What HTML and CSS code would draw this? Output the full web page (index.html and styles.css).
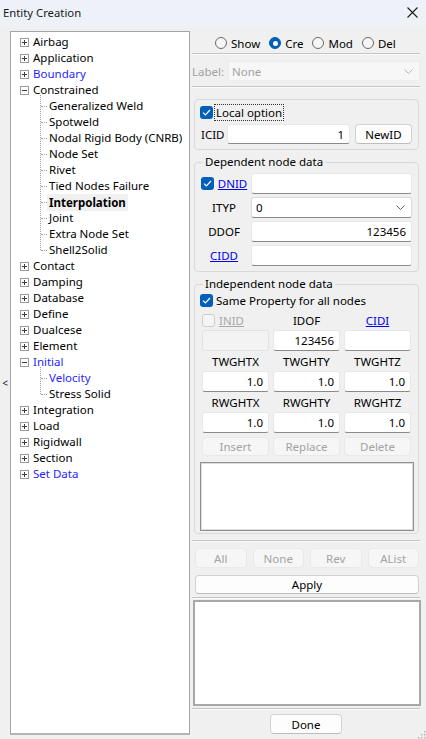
FILE: index.html
```html
<!DOCTYPE html>
<html>
<head>
<meta charset="utf-8">
<title>Entity Creation</title>
<link rel="stylesheet" href="styles.css">
</head>
<body>
<div class="win">
  <div class="titlebar">
    <span class="title">Entity Creation</span>
    <svg class="close" width="11" height="11" viewBox="0 0 11 11"><path d="M0.5 0.5L10.5 10.5M10.5 0.5L0.5 10.5" stroke="#1c1c1c" stroke-width="1.1" fill="none"/></svg>
  </div>
  <div class="main">
    <div class="splitter"><span>&lt;</span></div>
    <div class="tree">
      <div class="row"><svg class="exp" viewBox="0 0 9 9"><rect x="0.5" y="0.5" width="8" height="8" fill="#fff" stroke="#9a9a9a"/><path d="M2 4.5h5M4.5 2v5" stroke="#3c3c3c"/></svg><span class="t">Airbag</span></div>
      <div class="row"><svg class="exp" viewBox="0 0 9 9"><rect x="0.5" y="0.5" width="8" height="8" fill="#fff" stroke="#9a9a9a"/><path d="M2 4.5h5M4.5 2v5" stroke="#3c3c3c"/></svg><span class="t">Application</span></div>
      <div class="row"><svg class="exp" viewBox="0 0 9 9"><rect x="0.5" y="0.5" width="8" height="8" fill="#fff" stroke="#9a9a9a"/><path d="M2 4.5h5M4.5 2v5" stroke="#3c3c3c"/></svg><span class="t blue">Boundary</span></div>
      <div class="row"><svg class="exp" viewBox="0 0 9 9"><rect x="0.5" y="0.5" width="8" height="8" fill="#fff" stroke="#9a9a9a"/><path d="M2 4.5h5" stroke="#3c3c3c"/></svg><span class="t">Constrained</span></div>
      <div class="kids">
        <div class="kid"><span class="t">Generalized Weld</span></div>
        <div class="kid"><span class="t">Spotweld</span></div>
        <div class="kid"><span class="t">Nodal Rigid Body (CNRB)</span></div>
        <div class="kid"><span class="t">Node Set</span></div>
        <div class="kid"><span class="t">Rivet</span></div>
        <div class="kid"><span class="t">Tied Nodes Failure</span></div>
        <div class="kid"><span class="t sel">Interpolation</span></div>
        <div class="kid"><span class="t">Joint</span></div>
        <div class="kid"><span class="t">Extra Node Set</span></div>
        <div class="kid"><span class="t">Shell2Solid</span></div>
      </div>
      <div class="row"><svg class="exp" viewBox="0 0 9 9"><rect x="0.5" y="0.5" width="8" height="8" fill="#fff" stroke="#9a9a9a"/><path d="M2 4.5h5M4.5 2v5" stroke="#3c3c3c"/></svg><span class="t">Contact</span></div>
      <div class="row"><svg class="exp" viewBox="0 0 9 9"><rect x="0.5" y="0.5" width="8" height="8" fill="#fff" stroke="#9a9a9a"/><path d="M2 4.5h5M4.5 2v5" stroke="#3c3c3c"/></svg><span class="t">Damping</span></div>
      <div class="row"><svg class="exp" viewBox="0 0 9 9"><rect x="0.5" y="0.5" width="8" height="8" fill="#fff" stroke="#9a9a9a"/><path d="M2 4.5h5M4.5 2v5" stroke="#3c3c3c"/></svg><span class="t">Database</span></div>
      <div class="row"><svg class="exp" viewBox="0 0 9 9"><rect x="0.5" y="0.5" width="8" height="8" fill="#fff" stroke="#9a9a9a"/><path d="M2 4.5h5M4.5 2v5" stroke="#3c3c3c"/></svg><span class="t">Define</span></div>
      <div class="row"><svg class="exp" viewBox="0 0 9 9"><rect x="0.5" y="0.5" width="8" height="8" fill="#fff" stroke="#9a9a9a"/><path d="M2 4.5h5M4.5 2v5" stroke="#3c3c3c"/></svg><span class="t">Dualcese</span></div>
      <div class="row"><svg class="exp" viewBox="0 0 9 9"><rect x="0.5" y="0.5" width="8" height="8" fill="#fff" stroke="#9a9a9a"/><path d="M2 4.5h5M4.5 2v5" stroke="#3c3c3c"/></svg><span class="t">Element</span></div>
      <div class="row"><svg class="exp" viewBox="0 0 9 9"><rect x="0.5" y="0.5" width="8" height="8" fill="#fff" stroke="#9a9a9a"/><path d="M2 4.5h5" stroke="#3c3c3c"/></svg><span class="t blue">Initial</span></div>
      <div class="kids">
        <div class="kid"><span class="t blue">Velocity</span></div>
        <div class="kid"><span class="t">Stress Solid</span></div>
      </div>
      <div class="row"><svg class="exp" viewBox="0 0 9 9"><rect x="0.5" y="0.5" width="8" height="8" fill="#fff" stroke="#9a9a9a"/><path d="M2 4.5h5M4.5 2v5" stroke="#3c3c3c"/></svg><span class="t">Integration</span></div>
      <div class="row"><svg class="exp" viewBox="0 0 9 9"><rect x="0.5" y="0.5" width="8" height="8" fill="#fff" stroke="#9a9a9a"/><path d="M2 4.5h5M4.5 2v5" stroke="#3c3c3c"/></svg><span class="t">Load</span></div>
      <div class="row"><svg class="exp" viewBox="0 0 9 9"><rect x="0.5" y="0.5" width="8" height="8" fill="#fff" stroke="#9a9a9a"/><path d="M2 4.5h5M4.5 2v5" stroke="#3c3c3c"/></svg><span class="t">Rigidwall</span></div>
      <div class="row"><svg class="exp" viewBox="0 0 9 9"><rect x="0.5" y="0.5" width="8" height="8" fill="#fff" stroke="#9a9a9a"/><path d="M2 4.5h5M4.5 2v5" stroke="#3c3c3c"/></svg><span class="t">Section</span></div>
      <div class="row"><svg class="exp" viewBox="0 0 9 9"><rect x="0.5" y="0.5" width="8" height="8" fill="#fff" stroke="#9a9a9a"/><path d="M2 4.5h5M4.5 2v5" stroke="#3c3c3c"/></svg><span class="t blue">Set Data</span></div>
    </div>

    <div class="panel">
      <div class="radios">
        <div class="radio"><span class="rc"></span><span>Show</span></div>
        <div class="radio"><span class="rc on"></span><span>Cre</span></div>
        <div class="radio"><span class="rc"></span><span>Mod</span></div>
        <div class="radio"><span class="rc"></span><span>Del</span></div>
      </div>
      <div class="sep"></div>
      <div class="labelrow">
        <span class="lab">Label:</span>
        <div class="combo dis"><span>None</span><svg class="chev" width="9" height="5" viewBox="0 0 9 5"><path d="M0.5 0.5L4.5 4.5L8.5 0.5" stroke="#b4b4b4" fill="none"/></svg></div>
      </div>
      <div class="sep sep2"></div>

      <div class="grp1">
        <div class="lrow">
          <span class="cb"><svg width="9" height="7" viewBox="0 0 9 7"><path d="M1 3.6L3.4 6L8 1" stroke="#fff" stroke-width="1.2" fill="none"/></svg></span>
          <span class="focus">Local option</span>
        </div>
        <div class="irow">
          <span class="icid">ICID</span>
          <div class="inp w123">1</div>
          <div class="btn newid">NewID</div>
        </div>
      </div>

      <fieldset class="grp">
        <legend>Dependent node data</legend>
        <div class="frow first">
          <div class="fl"><span class="cb"><svg width="9" height="7" viewBox="0 0 9 7"><path d="M1 3.6L3.4 6L8 1" stroke="#fff" stroke-width="1.2" fill="none"/></svg></span><span class="link">DNID</span></div>
          <div class="inp"></div>
        </div>
        <div class="frow">
          <div class="fl">ITYP</div>
          <div class="combo"><span>0</span><svg class="chev" width="9" height="5" viewBox="0 0 9 5"><path d="M0.5 0.5L4.5 4.5L8.5 0.5" stroke="#606060" fill="none"/></svg></div>
        </div>
        <div class="frow">
          <div class="fl">DDOF</div>
          <div class="inp">123456</div>
        </div>
        <div class="frow">
          <div class="fl"><span class="link">CIDD</span></div>
          <div class="inp"></div>
        </div>
      </fieldset>

      <fieldset class="grp grp3">
        <legend>Independent node data</legend>
        <div class="srow">
          <span class="cb"><svg width="9" height="7" viewBox="0 0 9 7"><path d="M1 3.6L3.4 6L8 1" stroke="#fff" stroke-width="1.2" fill="none"/></svg></span>
          <span>Same Property for all nodes</span>
        </div>
        <div class="g3">
          <div class="gl left"><span class="cb dis"></span><span class="dlink">INID</span></div>
          <div class="gl">IDOF</div>
          <div class="gl"><span class="link">CIDI</span></div>
          <div class="inp dis"></div>
          <div class="inp">123456</div>
          <div class="inp"></div>
          <div class="gl">TWGHTX</div>
          <div class="gl">TWGHTY</div>
          <div class="gl">TWGHTZ</div>
          <div class="inp">1.0</div>
          <div class="inp">1.0</div>
          <div class="inp">1.0</div>
          <div class="gl">RWGHTX</div>
          <div class="gl">RWGHTY</div>
          <div class="gl">RWGHTZ</div>
          <div class="inp">1.0</div>
          <div class="inp">1.0</div>
          <div class="inp">1.0</div>
        </div>
        <div class="g3 btns3">
          <div class="btn dis">Insert</div>
          <div class="btn dis">Replace</div>
          <div class="btn dis">Delete</div>
        </div>
        <div class="listbox"></div>
      </fieldset>

      <div class="sep sep3"></div>
      <div class="btns4">
        <div class="btn dis">All</div>
        <div class="btn dis">None</div>
        <div class="btn dis">Rev</div>
        <div class="btn dis">AList</div>
      </div>
      <div class="btn apply">Apply</div>
      <div class="sep sep4"></div>
      <div class="textarea"></div>
      <div class="sep sep5"></div>
      <div class="btn done">Done</div>
    </div>
  </div>
  <svg class="grip" width="9" height="9" viewBox="0 0 9 9"><g fill="#b0b0b0"><rect x="7" y="1" width="1.4" height="1.4"/><rect x="4" y="4" width="1.4" height="1.4"/><rect x="7" y="4" width="1.4" height="1.4"/><rect x="1" y="7" width="1.4" height="1.4"/><rect x="4" y="7" width="1.4" height="1.4"/><rect x="7" y="7" width="1.4" height="1.4"/></g></svg>
</div>
</body>
</html>
```

FILE: styles.css
```css
* { box-sizing: border-box; }
html, body { margin: 0; padding: 0; }
body {
  width: 426px;
  height: 739px;
  overflow: hidden;
  background: #f0f0f0;
  font-family: "Noto Sans", "Open Sans", sans-serif;
  font-size: 11.5px;
  color: #000;
}
.win { position: relative; width: 426px; height: 739px; }

.titlebar {
  height: 27px;
  background: #eef2f8;
  display: flex;
  align-items: center;
  justify-content: space-between;
  padding: 0 8px 3px 3px;
}
.title { font-size: 11.3px; color: #1a1a1a; }

.main { display: flex; height: 712px; }

.splitter {
  width: 10px;
  display: flex;
  align-items: center;
  justify-content: center;
  font-size: 10px;
  color: #222;
}

.tree {
  width: 180px;
  height: 704px;
  margin-top: 4px;
  background: #fff;
  border: 1px solid #a4a4aa;
  border-bottom: 2px solid #b4b4b8;
  padding-top: 2px;
}
.row {
  height: 16px;
  display: flex;
  align-items: center;
  padding-left: 9px;
}
.exp { width: 9px; height: 9px; margin-right: 2px; flex: none; }
.t { padding: 0 2px; line-height: 16px; white-space: nowrap; }
.blue { color: #1f1fff; }
.sel { font-weight: bold; background: #f0f0f0; line-height: 17px; }

.kids { position: relative; }
.kids::before {
  content: "";
  position: absolute;
  left: 29px;
  top: -3px;
  bottom: 8px;
  border-left: 1px dotted #a0a0a0;
}
.kid {
  position: relative;
  height: 16px;
  display: flex;
  align-items: center;
  padding-left: 36px;
}
.kid::before {
  content: "";
  position: absolute;
  left: 30px;
  top: 8px;
  width: 6px;
  border-top: 1px dotted #a0a0a0;
}

.panel { width: 236px; display: flex; flex-direction: column; }

.radios {
  display: flex;
  align-items: center;
  height: 20px;
  margin-top: 6px;
  padding-left: 25px;
}
.radio { display: flex; align-items: center; gap: 4px; margin-right: 9px; }
.rc {
  width: 12px;
  height: 12px;
  border-radius: 50%;
  border: 1px solid #6a6a6a;
  background: #f6f6f6;
  display: flex;
  align-items: center;
  justify-content: center;
}
.rc.on { background: #005fb8; border-color: #005fb8; }
.rc.on::after {
  content: "";
  width: 5px;
  height: 5px;
  border-radius: 50%;
  background: #fff;
}

.sep {
  margin: 0 6px 0 2px;
  height: 2px;
  border-top: 1px solid #c4c4c4;
  border-bottom: 1px solid #fafafa;
}
.sep2 { margin-top: 5px; }
.sep3 { margin-top: 6px; }
.sep4 { margin-top: 3px; }
.sep5 { margin-top: 2px; }

.labelrow {
  display: flex;
  align-items: center;
  height: 20px;
  margin-top: 6px;
  padding-left: 2px;
}
.lab { width: 36px; color: #a2a2a2; }

.combo {
  height: 21px;
  background: #fff;
  border: 1px solid #dadada;
  border-bottom-color: #8a8a8a;
  border-radius: 3px;
  display: flex;
  align-items: center;
  justify-content: space-between;
  padding: 0 6px 0 4px;
}
.combo.dis {
  width: 192px;
  height: 20px;
  background: #f7f7f7;
  border-color: #ececec;
  color: #a2a2a2;
  padding-left: 3px;
}

.grp1 {
  margin: 11px 7px 0 4px;
  border: 1px solid #d9d9d9;
  border-radius: 4px;
  padding: 4px 0 5px 5px;
}
.lrow { height: 17px; display: flex; align-items: center; }
.cb {
  width: 13px;
  height: 13px;
  border-radius: 3px;
  background: #005fb8;
  display: flex;
  align-items: center;
  justify-content: center;
  flex: none;
}
.cb.dis { background: #f5f5f5; border: 1px solid #cdcdcd; }
.focus {
  margin-left: 1px;
  padding: 0 1px;
  border: 1px dotted #333;
  line-height: 15px;
}
.irow { display: flex; align-items: center; height: 20px; margin-top: 3px; }
.icid { width: 27px; padding-left: 1px; }

.inp {
  height: 21px;
  background: #fff;
  border: 1px solid #e8e8e8;
  border-bottom-color: #8a8a8a;
  border-radius: 3px;
  display: flex;
  align-items: center;
  justify-content: flex-end;
  padding-right: 5px;
}
.inp.dis { background: #f3f3f3; border-color: #e2e2e2; }
.w123 { width: 123px; height: 20px; }

.btn {
  height: 20px;
  background: #fdfdfd;
  border: 1px solid #d2d2d2;
  border-bottom-color: #bdbdbd;
  border-radius: 4px;
  display: flex;
  align-items: center;
  justify-content: center;
}
.btn.dis {
  background: #f6f6f6;
  border-color: #e9e9e9;
  color: #a3a3a3;
}
.newid { width: 57px; margin-left: 5px; }

.grp {
  margin: 5px 7px 0 4px;
  border: 1px solid #d9d9d9;
  border-radius: 4px;
  padding: 0 6px 5px 2px;
  min-width: 0;
}
.grp legend {
  padding: 0 2px;
  margin-left: 6px;
  line-height: 14px;
}
.frow {
  display: grid;
  grid-template-columns: 54px 161px;
  height: 21px;
  margin-top: 3px;
}
.frow.first { margin-top: 4px; }
.fl { display: flex; align-items: center; justify-content: center; gap: 4px; }
.link { color: #0000ee; text-decoration: underline; }
.dlink { color: #a8a8a8; text-decoration: underline; }

.grp3 { padding-bottom: 2px; }
.srow { height: 19px; display: flex; align-items: center; gap: 3px; padding-left: 3px; }
.g3 {
  display: grid;
  grid-template-columns: repeat(3, 67px);
  grid-auto-rows: 20px 21px;
  column-gap: 4px;
  padding-left: 5px;
}
.gl { display: flex; align-items: center; justify-content: center; }
.gl.left { justify-content: flex-start; gap: 4px; }
.btns3 { grid-auto-rows: 19px; margin-top: 4px; }
.btns3 .btn { height: 19px; }
.listbox {
  margin: 6px 0 0 3px;
  width: 214px;
  height: 69px;
  background: #fff;
  border: 1px solid #8f8f94;
  box-shadow: inset 0 0 0 1px #dcdcdc;
}

.btns4 {
  display: grid;
  grid-template-columns: repeat(4, 1fr);
  column-gap: 6px;
  margin: 6px 7px 0 5px;
}
.apply { margin: 7px 7px 0 5px; height: 19px; }
.textarea {
  margin: 1px 5px 0 3px;
  height: 106px;
  background: #fff;
  border: 2px solid #a8a8a8;
}
.done { width: 72px; margin: 4px 0 0 80px; }

.grip { position: absolute; right: 0; bottom: 0; }
```
